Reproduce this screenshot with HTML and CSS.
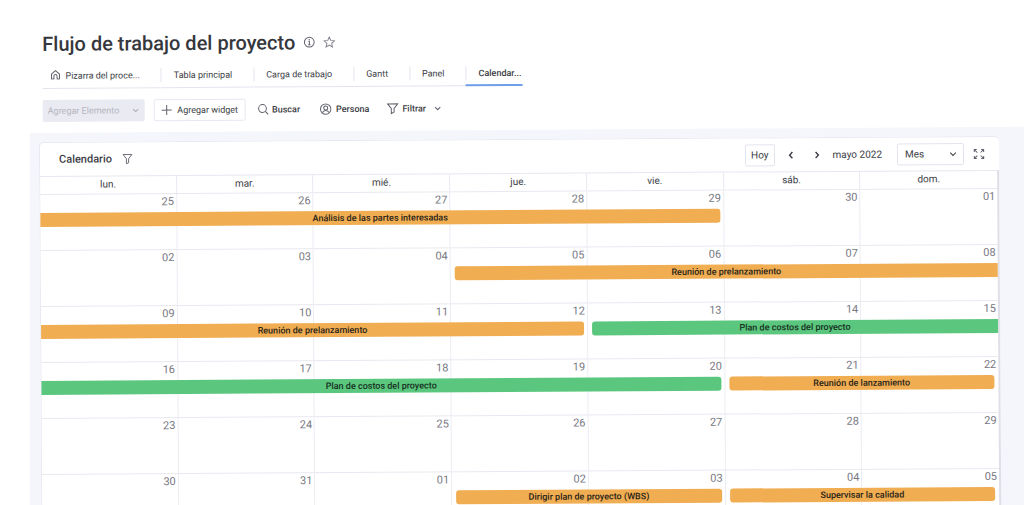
FILE: index.html
```html
<!DOCTYPE html>
<html lang="es">
<head>
<meta charset="utf-8">
<meta name="viewport" content="width=device-width, initial-scale=1">
<title>Flujo de trabajo del proyecto</title>
<link rel="stylesheet" href="styles.css">
</head>
<body>
<div class="stage">
<div class="app">
  <header class="top">
    <div class="title-row">
      <h1 class="title">Flujo de trabajo del proyecto</h1>
      <button class="icon-btn" aria-label="Información"><svg width="12" height="12" viewBox="0 0 12 12"><circle cx="6" cy="6" r="4.9"/><path d="M5.2 5.3h.9v3.2M4.9 8.6h2.3"/><circle cx="6" cy="3.6" r=".3"/></svg></button>
      <button class="icon-btn star" aria-label="Favorito"><svg width="12" height="12" viewBox="0 0 12 12"><path d="M6 .9l1.5 3.4 3.7.4-2.8 2.5.8 3.7L6 9l-3.2 1.9.8-3.7L.8 4.7l3.7-.4z"/></svg></button>
    </div>
    <nav class="tabs">
      <a class="tab first" href="#"><svg width="10" height="10" viewBox="0 0 10 10"><path d="M1 4.3L5 .9l4 3.4v4.8H6.6V6.4a1.6 1.6 0 0 0-3.2 0v2.7H1z"/></svg><span>Pizarra del proce...</span></a>
      <a class="tab" href="#"><span>Tabla principal</span></a>
      <a class="tab" href="#"><span>Carga de trabajo</span></a>
      <a class="tab" href="#"><span>Gantt</span></a>
      <a class="tab" href="#"><span>Panel</span></a>
      <a class="tab active" href="#" aria-current="page"><span>Calendar...</span></a>
    </nav>
    <div class="toolbar">
      <button class="btn add-item" disabled>Agregar Elemento<svg width="8" height="8" viewBox="0 0 8 8"><path d="M1.4 2.7L4 5.3l2.6-2.6"/></svg></button>
      <button class="btn add-widget"><svg width="12" height="12" viewBox="0 0 12 12"><path d="M6 1v10M1 6h10"/></svg>Agregar widget</button>
      <button class="tool search"><svg width="11" height="12" viewBox="0 0 11 12"><circle cx="4.8" cy="5" r="3.9"/><path d="M7.6 7.9l2.9 3"/></svg>Buscar</button>
      <button class="tool person"><svg width="12" height="12" viewBox="0 0 12 12"><circle cx="6" cy="6" r="5.2"/><circle cx="6" cy="4.8" r="2"/><path d="M2.7 9.6c.5-1.5 1.8-2.3 3.3-2.3s2.8.8 3.3 2.3"/></svg>Persona</button>
      <button class="tool filter"><svg width="12" height="12" viewBox="0 0 12 12"><path d="M.9 1.2h10.2L7.4 5.8v3.5l-2.8 1.6V5.8z"/></svg>Filtrar<svg class="caret" width="8" height="8" viewBox="0 0 8 8"><path d="M1.4 2.7L4 5.3l2.6-2.6"/></svg></button>
    </div>
  </header>

  <main class="board">
    <section class="card">
      <div class="card-head">
        <h2 class="card-title">Calendario</h2>
        <button class="icon-btn funnel" aria-label="Filtrar calendario"><svg width="11" height="11" viewBox="0 0 12 12"><path d="M1.2 1.2h9.6L7.2 5.9v4.4l-2.4 1V5.9z"/></svg></button>
        <div class="controls">
          <button class="today">Hoy</button>
          <button class="icon-btn step" aria-label="Anterior"><svg width="10" height="10" viewBox="0 0 10 10"><path d="M6.4 1.9L3.6 5l2.8 3.1"/></svg></button>
          <button class="icon-btn step" aria-label="Siguiente"><svg width="10" height="10" viewBox="0 0 10 10"><path d="M3.6 1.9L6.4 5 3.6 8.1"/></svg></button>
          <span class="month">mayo 2022</span>
          <label class="view"><select aria-label="Vista"><option>Mes</option><option>Semana</option><option>Día</option></select><svg width="8" height="8" viewBox="0 0 8 8"><path d="M1.2 2.5L4 5.3l2.8-2.8"/></svg></label>
          <button class="icon-btn expand" aria-label="Pantalla completa"><svg width="12" height="12" viewBox="0 0 12 12"><path d="M1.3 4V1.5h2.5M1.5 1.7l2.9 2.8M8.2 1.5h2.5V4M10.5 1.7L7.6 4.5M1.3 8v2.5h2.5M1.5 10.3l2.9-2.8M8.2 10.5h2.5V8M10.5 10.3L7.6 7.5"/></svg></button>
        </div>
      </div>
      <div class="calendar">
        <div class="weekdays"><span>lun.</span><span>mar.</span><span>mié.</span><span>jue.</span><span>vie.</span><span>sáb.</span><span>dom.</span></div>
        <div class="week">
          <time class="day">25</time><time class="day">26</time><time class="day">27</time><time class="day">28</time><time class="day">29</time><time class="day">30</time><time class="day">01</time>
          <div class="event orange ends c1-5">Análisis de las partes interesadas</div>
        </div>
        <div class="week">
          <time class="day">02</time><time class="day">03</time><time class="day">04</time><time class="day">05</time><time class="day">06</time><time class="day">07</time><time class="day">08</time>
          <div class="event orange starts c4-7">Reunión de prelanzamiento</div>
        </div>
        <div class="week">
          <time class="day">09</time><time class="day">10</time><time class="day">11</time><time class="day">12</time><time class="day">13</time><time class="day">14</time><time class="day">15</time>
          <div class="event orange ends c1-4">Reunión de prelanzamiento</div>
          <div class="event green starts c5-7">Plan de costos del proyecto</div>
        </div>
        <div class="week">
          <time class="day">16</time><time class="day">17</time><time class="day">18</time><time class="day">19</time><time class="day">20</time><time class="day">21</time><time class="day">22</time>
          <div class="event green ends c1-5">Plan de costos del proyecto</div>
          <div class="event orange starts ends c6-7">Reunión de lanzamiento</div>
        </div>
        <div class="week">
          <time class="day">23</time><time class="day">24</time><time class="day">25</time><time class="day">26</time><time class="day">27</time><time class="day">28</time><time class="day">29</time>
        </div>
        <div class="week">
          <time class="day">30</time><time class="day">31</time><time class="day">01</time><time class="day">02</time><time class="day">03</time><time class="day">04</time><time class="day">05</time>
          <div class="event orange starts ends c4-5">Dirigir plan de proyecto (WBS)</div>
          <div class="event orange starts ends c6-7">Supervisar la calidad</div>
        </div>
      </div>
    </section>
  </main>
</div>
</div>
</body>
</html>
```
FILE: styles.css
```css
* { box-sizing: border-box; }

body {
  margin: 0;
  background: #fff;
  color: #3c3d45;
  font-family: Roboto, "Liberation Sans", sans-serif;
  font-size: 10px;
  line-height: 14px;
}

button, select {
  margin: 0;
  padding: 0;
  border: 0;
  background: none;
  color: inherit;
  font: inherit;
}

a { color: inherit; text-decoration: none; }

svg {
  display: block;
  flex: none;
  fill: none;
  stroke: #60616c;
  stroke-width: 1;
}

/* the clipped area in which the slightly tilted app sits */
.stage {
  height: 100vh;
  margin-left: 30px;
  overflow: hidden;
}

/* runs a little past the left edge so that the tilt leaves no gap */
.app {
  margin-left: -4px;
  transform: rotate(-0.36deg);
  transform-origin: 0 0;
}

.top { padding: 31px 0 11px 16px; }

.title-row {
  display: flex;
  align-items: center;
  gap: 8px;
  height: 26px;
}

.title {
  margin: 0;
  font-size: 20px;
  line-height: 26px;
  font-weight: 500;
  color: #36373d;
}

.icon-btn { display: flex; align-items: center; }

.star svg { stroke: #85868f; }

.tabs {
  display: flex;
  width: max-content;
  height: 24px;
  margin-top: 8px;
  font-size: 9px;
}

.tab {
  display: flex;
  align-items: flex-start;
  border-bottom: 1px solid #e3e5ee;
}

.tab span {
  padding: 0 21px 0 12px;
  border-left: 1px solid #e3e5ee;
  margin-top: 4px;
  line-height: 14px;
}

.tab.first { padding-left: 8px; }
.tab.first svg { margin-top: 5px; }
.tab.first span { padding-left: 5px; border-left: 0; }

.tab.active {
  font-weight: 500;
  border-bottom: 2px solid #6f9fe8;
}

.tab.active span { padding-right: 1px; }

.toolbar {
  display: flex;
  align-items: center;
  height: 22px;
  margin-top: 11px;
  font-size: 9px;
}

.btn, .tool { display: flex; align-items: center; white-space: nowrap; }

.btn { height: 22px; border-radius: 2px; }

.add-item {
  gap: 12px;
  padding: 0 5px;
  background: #e9eaf2;
  color: #b4b5be;
}

.add-item svg { stroke: #a5a6b0; }

.add-widget {
  gap: 5px;
  margin-left: 9px;
  padding: 0 7px 0 6px;
  border: 1px solid #e6e8f1;
}

.tool { gap: 4px; font-weight: 500; }
.search { margin-left: 12px; gap: 3px; }
.person { margin-left: 20px; }
.filter { margin-left: 17px; }
.caret { margin-left: 4px; }

.board {
  padding: 9px 26px 20px 12px;
  background: #f5f6fb;
}

.card {
  background: #fff;
  border: 1px solid #e8e9f1;
  border-bottom: 0;
  border-right: 0;
  border-radius: 5px;
}

.card-head {
  display: flex;
  align-items: center;
  height: 33px;
  padding: 0 14px 0 19px;
}

.card-title {
  margin: 0;
  font-size: 11px;
  line-height: 14px;
  font-weight: 500;
}

.funnel { margin-left: 10px; }

.controls {
  display: flex;
  align-items: center;
  margin-left: auto;
}

.today {
  height: 22px;
  padding: 0 5px;
  border: 1px solid #e3e5ee;
  border-radius: 2px;
}

.step { margin-left: 11px; }
.step + .step { margin-left: 16px; }
.step svg { stroke: #3c3d45; stroke-width: 1.4; }

.month { margin-left: 11px; }

.view {
  display: grid;
  align-items: center;
  width: 67px;
  height: 22px;
  margin-left: 15px;
  border: 1px solid #e3e5ee;
  border-radius: 2px;
}

.view select, .view svg { grid-area: 1 / 1; }

.view select {
  appearance: none;
  height: 20px;
  padding: 0 18px 0 7px;
}

.view svg {
  justify-self: end;
  margin-right: 6px;
  stroke: #3c3d45;
  pointer-events: none;
}

.expand { margin-left: 9px; }

.calendar {
  border-top: 1px solid #e6e7f0;
  border-right: 2px solid #dfe0e7;
}

.weekdays, .week {
  display: grid;
  grid-template-columns: repeat(7, 1fr);
}

.weekdays { height: 17px; text-align: center; }

.weekdays span {
  line-height: 16px;
  border-right: 1px solid #e8e9f1;
}

.weekdays span:last-child, .day:nth-of-type(7) { border-right: 0; }

.week {
  grid-template-rows: 18px 14px 24px;
  border-top: 1px solid #e8e9f1;
  margin-bottom: -1px;
}

.day {
  grid-row: 1 / 4;
  padding: 1px 2px 0 0;
  border-right: 1px solid #ecedf4;
  text-align: right;
  font-size: 11px;
  color: #777882;
}

.day:nth-of-type(1) { grid-column: 1; }
.day:nth-of-type(2) { grid-column: 2; }
.day:nth-of-type(3) { grid-column: 3; }
.day:nth-of-type(4) { grid-column: 4; }
.day:nth-of-type(5) { grid-column: 5; }
.day:nth-of-type(6) { grid-column: 6; }
.day:nth-of-type(7) { grid-column: 7; }

.event {
  grid-row: 2;
  text-align: center;
  font-size: 9px;
  font-weight: 500;
  color: #292418;
  white-space: nowrap;
}

.orange { background: #f0ad52; }
.green { background: #5bc77e; color: #16301f; }
.starts { margin-left: 4px; border-radius: 3px 0 0 3px; }
.ends { margin-right: 4px; border-radius: 0 3px 3px 0; }
.starts.ends { border-radius: 3px; }

.c1-4 { grid-column: 1 / 5; }
.c1-5 { grid-column: 1 / 6; }
.c4-5 { grid-column: 4 / 6; }
.c4-7 { grid-column: 4 / 8; }
.c5-7 { grid-column: 5 / 8; }
.c6-7 { grid-column: 6 / 8; }
```
